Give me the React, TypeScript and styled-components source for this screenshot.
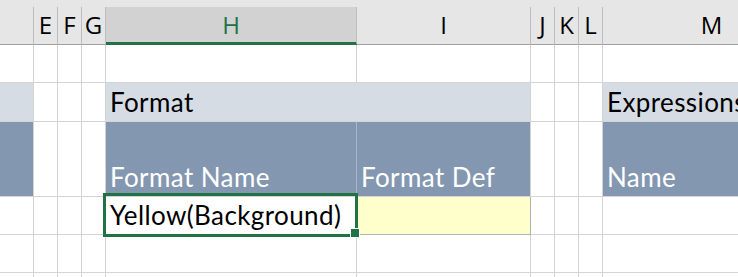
import styled, { createGlobalStyle, css } from 'styled-components';

const GlobalStyle = createGlobalStyle`
	html, body {
		margin: 0;
		padding: 0;
		background: #ffffff;
		overflow: hidden;
	}
`;

const COLUMNS = '34px 24px 24px 24px 251px 174px 24px 24px 24px 218px';
const GRID = '#d4d4d4';
const GREEN = '#217346';

type Fill = 'light' | 'dark' | 'yellow';

interface CellSpec {
	text?: string;
	fill?: Fill;
	join?: boolean;
	selected?: boolean;
}

const fills: Record<Fill, string> = {
	light: '#d6dce4',
	dark: '#8497b0',
	yellow: '#ffffcc',
};

const Sheet = styled.div`
	width: 738px;
	height: 277px;
	overflow: hidden;
	font-family: Lato, 'Liberation Sans', sans-serif;
`;

const TopStrip = styled.div`
	height: 7px;
	width: 821px;
	background: #e6e6e6;
`;

const HeaderRow = styled.div`
	display: grid;
	grid-template-columns: ${COLUMNS};
	height: 38px;
	background: #e6e6e6;
`;

const ColHeader = styled.div<{ $active?: boolean }>`
	box-sizing: border-box;
	display: flex;
	align-items: center;
	justify-content: center;
	border-right: 1px solid #bdbdbd;
	border-bottom: 1px solid #9e9e9e;
	font-family: 'Open Sans', 'Noto Sans', sans-serif;
	font-size: 24px;
	color: #000;
	padding-bottom: 2px;
	${({ $active }) =>
		$active &&
		css`
			background: #d2d2d2;
			color: ${GREEN};
			border-bottom: 3px solid ${GREEN};
			padding-bottom: 0;
		`}
`;

const Body = styled.div`
	display: grid;
	grid-template-columns: ${COLUMNS};
	grid-template-rows: 38px 39px 75px 38px 38px 38px;
`;

const Cell = styled.div<{
	$fill?: Fill;
	$join?: boolean;
	$dividerLight?: boolean;
	$selected?: boolean;
}>`
	position: relative;
	box-sizing: border-box;
	display: flex;
	align-items: flex-end;
	padding: 0 4px 6px;
	border-right: 1px solid ${GRID};
	border-bottom: 1px solid ${GRID};
	font-size: 26px;
	letter-spacing: 0.4px;
	line-height: 1;
	white-space: nowrap;
	color: #000;
	background: ${({ $fill }) => ($fill ? fills[$fill] : 'transparent')};
	z-index: ${({ $selected }) => ($selected ? 2 : 'auto')};
	${({ $fill }) =>
		$fill === 'dark' &&
		css`
			color: #ffffff;
		`}
	${({ $fill, $join }) =>
		$fill &&
		$join &&
		css`
			border-right-color: ${fills[$fill]};
		`}
	${({ $fill }) =>
		$fill === 'yellow' &&
		css`
			border-right-color: #b2b2b2;
			border-bottom-color: #b2b2b2;
		`}
	${({ $dividerLight }) =>
		$dividerLight &&
		css`
			border-right-color: #a9b6c8;
		`}
`;

const CellText = styled.span`
	display: block;
`;

const Selection = styled.div`
	position: absolute;
	left: -3px;
	top: -4px;
	width: 255px;
	height: 44px;
	box-sizing: border-box;
	border: 3px solid ${GREEN};
	pointer-events: none;
`;

const FillHandle = styled.div`
	position: absolute;
	right: -5px;
	bottom: -4px;
	width: 8px;
	height: 8px;
	background: ${GREEN};
	border: 1px solid #ffffff;
`;

const headers = [
	{ label: '' },
	{ label: 'E' },
	{ label: 'F' },
	{ label: 'G' },
	{ label: 'H', active: true },
	{ label: 'I' },
	{ label: 'J' },
	{ label: 'K' },
	{ label: 'L' },
	{ label: 'M' },
];

const empty: CellSpec = {};

const rows: CellSpec[][] = [
	Array(10).fill(empty),
	[
		{ fill: 'light' },
		empty,
		empty,
		empty,
		{ fill: 'light', join: true, text: 'Format' },
		{ fill: 'light' },
		empty,
		empty,
		empty,
		{ fill: 'light', text: 'Expressions' },
	],
	[
		{ fill: 'dark' },
		empty,
		empty,
		empty,
		{ fill: 'dark', text: 'Format Name' },
		{ fill: 'dark', text: 'Format Def' },
		empty,
		empty,
		empty,
		{ fill: 'dark', text: 'Name' },
	],
	[
		empty,
		empty,
		empty,
		empty,
		{ text: 'Yellow(Background)', selected: true },
		{ fill: 'yellow' },
		empty,
		empty,
		empty,
		empty,
	],
	Array(10).fill(empty),
	Array(10).fill(empty),
];

function App() {
	return (
		<>
			<GlobalStyle />
			<Sheet>
				<TopStrip />
				<HeaderRow>
					{headers.map((h, i) => (
						<ColHeader key={i} $active={h.active}>
							{h.label}
						</ColHeader>
					))}
				</HeaderRow>
				<Body>
					{rows.map((row, r) =>
						row.map((cell, c) => (
							<Cell
								key={`${r}-${c}`}
								$fill={cell.fill}
								$join={cell.join}
								$selected={cell.selected}
								$dividerLight={cell.fill === 'dark' && c === 4}
							>
								{cell.text && <CellText>{cell.text}</CellText>}
								{cell.selected && (
									<Selection>
										<FillHandle />
									</Selection>
								)}
							</Cell>
						)),
					)}
				</Body>
			</Sheet>
		</>
	);
}

export default App;
